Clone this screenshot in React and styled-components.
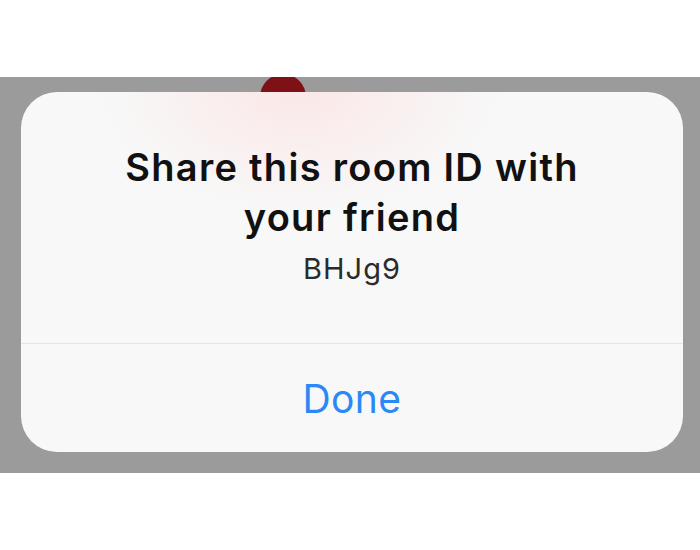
import React from "react";
import styled, {createGlobalStyle} from "styled-components";

const GlobalStyle = createGlobalStyle`
  html, body {
    margin: 0;
    padding: 0;
    background: #ffffff;
  }
  body {
    font-family: "Inter", "Liberation Sans", sans-serif;
  }
`;

const App = () => {
    return (
        <Page>
            <GlobalStyle/>
            <TopSpace/>
            <Backdrop>
                <RecordDot/>
                <Alert>
                    <Body>
                        <Title>Share this room ID with<br/>your friend</Title>
                        <RoomId>BHJg9</RoomId>
                    </Body>
                    <Divider/>
                    <Action>Done</Action>
                </Alert>
            </Backdrop>
        </Page>
    );
};

const Page = styled.div`
  width: 700px;
  height: 550px;
  display: flex;
  flex-direction: column;
  background: #ffffff;
`;

const TopSpace = styled.div`
  height: 77px;
`;

const Backdrop = styled.div`
  position: relative;
  height: 396px;
  background: #9b9b9b;
  overflow: hidden;
  padding: 15px 17px 0 21px;
  box-sizing: border-box;
`;

const RecordDot = styled.div`
  position: absolute;
  left: 260px;
  top: -3px;
  width: 46px;
  height: 46px;
  border-radius: 50%;
  background: #7e1116;
`;

const Alert = styled.div`
  position: relative;
  height: 360px;
  border-radius: 36px;
  background:
    radial-gradient(ellipse 200px 120px at 42% 0%, rgba(252, 226, 226, 0.75), rgba(248, 240, 240, 0) 100%),
    #f8f8f8;
  display: flex;
  flex-direction: column;
`;

const Body = styled.div`
  height: 251px;
  box-sizing: border-box;
  padding-top: 50px;
  display: flex;
  flex-direction: column;
  align-items: center;
`;

const Title = styled.div`
  font-size: 38px;
  line-height: 50px;
  font-weight: 600;
  letter-spacing: 1.3px;
  color: #111111;
  text-align: center;
`;

const RoomId = styled.div`
  margin-top: 9px;
  font-size: 29px;
  line-height: 36px;
  letter-spacing: 1px;
  color: #2b2b2b;
`;

const Divider = styled.div`
  height: 1px;
  background: #e4e4e4;
`;

const Action = styled.div`
  flex: 1;
  display: flex;
  align-items: center;
  justify-content: center;
  font-size: 39px;
  letter-spacing: 0.4px;
  color: #2b88f7;
`;

export default App;
